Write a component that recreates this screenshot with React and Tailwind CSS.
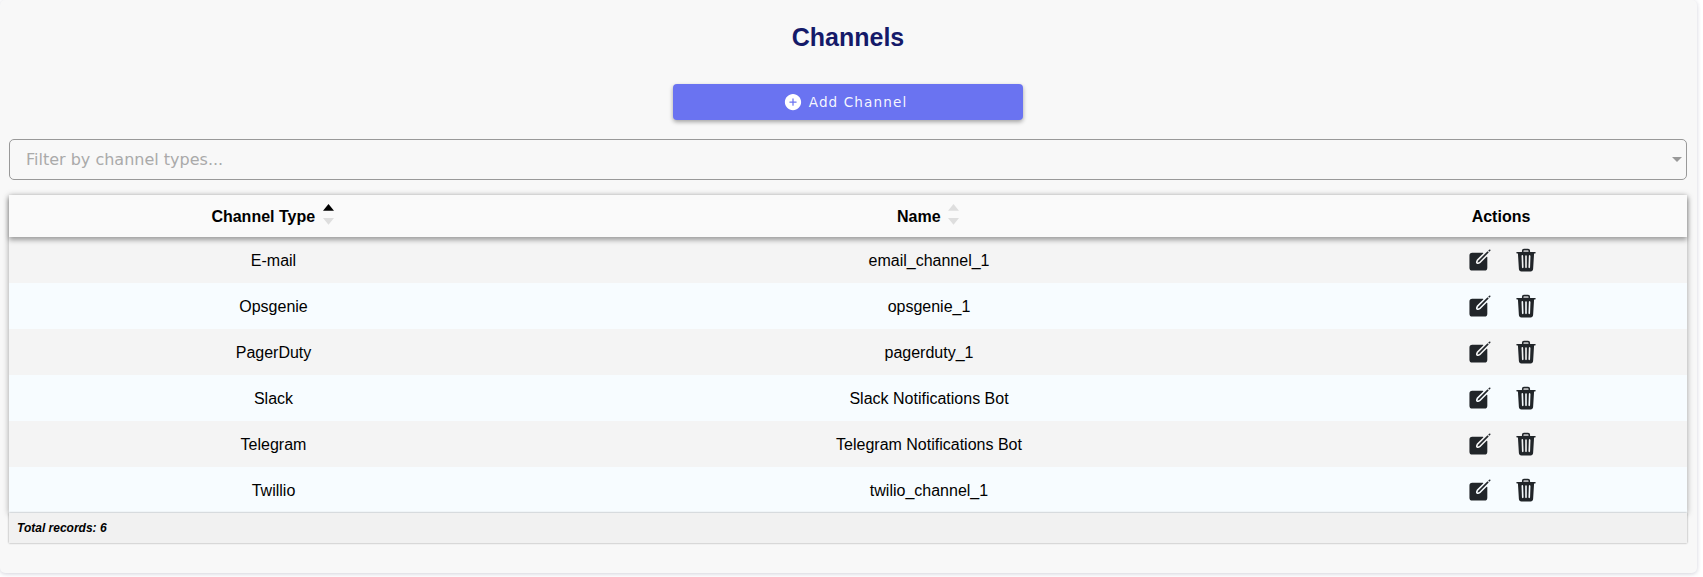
import { IoAddCircle, IoCreate, IoTrash } from "react-icons/io5";

const channels = [
  { type: "E-mail", name: "email_channel_1" },
  { type: "Opsgenie", name: "opsgenie_1" },
  { type: "PagerDuty", name: "pagerduty_1" },
  { type: "Slack", name: "Slack Notifications Bot" },
  { type: "Telegram", name: "Telegram Notifications Bot" },
  { type: "Twillio", name: "twilio_channel_1" },
];

const columns = "grid grid-cols-[529px_782px_367px]";

function SortArrows({ ascending = false }) {
  return (
    <svg width="11" height="21" viewBox="0 0 11 21" className="-mt-[5px]">
      <path d="M5.5 0L11 6.8H0Z" fill={ascending ? "#000" : "#dedede"} />
      <path d="M0 14H11L5.5 20.8Z" fill="#dedede" />
    </svg>
  );
}

function HeaderCell({ label, ascending }) {
  return (
    <div className="flex items-center justify-center gap-[7.5px] pt-[2px] pr-[2px]">
      <span>{label}</span>
      <SortArrows ascending={ascending} />
    </div>
  );
}

export default function App() {
  return (
    <div className="h-[577px] overflow-hidden bg-white font-['Liberation_Sans',sans-serif] text-black">
      <div className="flex h-[573px] w-[1697px] flex-col items-center rounded-[5px] bg-[#f8f8f8] pt-[21px] pr-[10px] pl-[9px] shadow-[0_1px_4px_rgba(50,50,93,0.22)]">
        <h1 className="text-[25px] leading-8 font-bold text-[#151a69]">Channels</h1>

        <button className="mt-[31px] flex h-9 w-[350px] items-center justify-center gap-[6px] rounded-[4px] bg-[#6a73f1] pr-[6px] font-['DejaVu_Sans',sans-serif] text-[13.6px] tracking-[1.1px] text-white shadow-[0_2px_4px_rgba(0,0,0,0.35)]">
          <IoAddCircle size={20} />
          <span className="text-white/95">Add Channel</span>
        </button>

        <div className="mt-[19px] flex h-[41px] w-full items-center justify-between rounded-[5px] border border-[#999] pr-[4px] pl-4 font-['DejaVu_Sans',sans-serif] text-base text-[#aaa]">
          <span>Filter by channel types...</span>
          <svg width="10" height="5" viewBox="0 0 10 5">
            <path d="M0 0H10L5 5Z" fill="#999" />
          </svg>
        </div>

        <div className="mt-[15px] w-full shadow-[0_1px_6px_rgba(0,0,0,0.36)]">
          <div className={`${columns} relative h-[42px] bg-[#fafafa] font-bold shadow-[0_3px_5px_rgba(0,0,0,0.36)]`}>
            <HeaderCell label="Channel Type" ascending />
            <HeaderCell label="Name" />
            <div className="flex items-center justify-center pt-[2px] pr-[5px]">Actions</div>
          </div>
          {channels.map((channel) => (
            <div key={channel.name} className={`${columns} h-[46px] odd:bg-[#f7fcff] even:bg-[#f4f4f4]`}>
              <div className="flex items-center justify-center pt-[2px]">{channel.type}</div>
              <div className="flex items-center justify-center pt-[2px]">{channel.name}</div>
              <div className="flex items-center justify-center gap-5 pr-px pb-px text-[#212529]">
                <IoCreate size={26} />
                <IoTrash size={26} className="[&>path[fill=none]]:fill-[#b4b4b6]" />
              </div>
            </div>
          ))}
        </div>
        <div className="relative flex h-[30px] w-full items-center bg-[#f1f1f1] pl-2 text-xs font-bold italic shadow-[0_0_2px_rgba(0,0,0,0.4)]">
          Total records: 6
        </div>
      </div>
    </div>
  );
}
